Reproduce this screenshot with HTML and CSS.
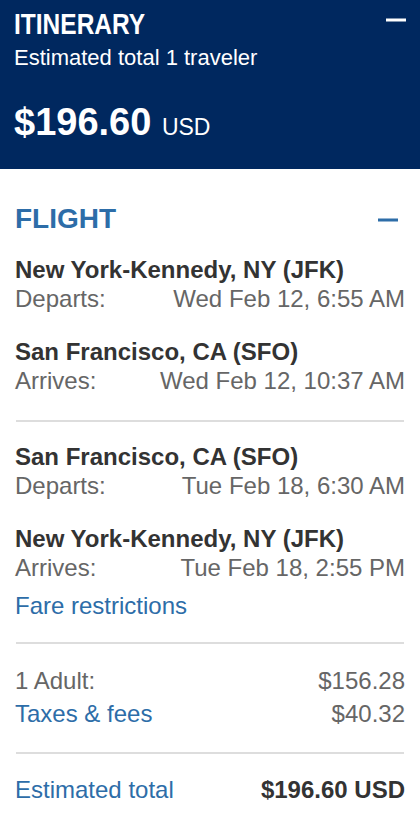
FILE: index.html
```html
<!DOCTYPE html>
<html lang="en">
<head>
<meta charset="utf-8">
<title>Itinerary</title>
<link rel="stylesheet" href="styles.css">
</head>
<body>
<div class="summary">
  <header class="header">
    <div class="title-row">
      <h1 class="title"><span class="title-text">ITINERARY</span></h1>
      <svg class="collapse" width="20" height="4" viewBox="0 0 20 4" aria-hidden="true"><rect x="0" y="0.5" width="20" height="3" fill="#ffffff"/></svg>
    </div>
    <div class="subtitle">Estimated total 1 traveler</div>
    <div class="price">$196.60 <span class="usd">USD</span></div>
  </header>

  <section class="content">
    <div class="flight-head">
      <h2 class="flight-title">FLIGHT</h2>
      <svg class="collapse-blue" width="20" height="4" viewBox="0 0 20 4" aria-hidden="true"><rect x="0" y="0.5" width="20" height="3" fill="#2d6da8"/></svg>
    </div>

    <div class="segment first">
      <div class="leg">
        <div class="city">New York-Kennedy, NY (JFK)</div>
        <div class="row"><span>Departs:</span><span>Wed Feb 12, 6:55 AM</span></div>
      </div>
      <div class="leg">
        <div class="city">San Francisco, CA (SFO)</div>
        <div class="row"><span>Arrives:</span><span>Wed Feb 12, 10:37 AM</span></div>
      </div>
    </div>

    <div class="divider div-a"></div>

    <div class="segment">
      <div class="leg">
        <div class="city">San Francisco, CA (SFO)</div>
        <div class="row"><span>Departs:</span><span>Tue Feb 18, 6:30 AM</span></div>
      </div>
      <div class="leg">
        <div class="city">New York-Kennedy, NY (JFK)</div>
        <div class="row"><span>Arrives:</span><span>Tue Feb 18, 2:55 PM</span></div>
      </div>
    </div>

    <a class="link fare" href="#">Fare restrictions</a>

    <div class="divider div-b"></div>

    <div class="row price-row first-price"><span>1 Adult:</span><span>$156.28</span></div>
    <div class="row price-row taxes"><a class="link" href="#">Taxes &amp; fees</a><span>$40.32</span></div>

    <div class="divider div-c"></div>

    <div class="row total"><a class="link" href="#">Estimated total</a><span class="total-value">$196.60 USD</span></div>
  </section>
</div>
</body>
</html>
```

FILE: styles.css
```css
* { box-sizing: border-box; }

html, body {
  margin: 0;
  padding: 0;
  background: #ffffff;
}

body {
  font-family: "Liberation Sans", Arial, Helvetica, sans-serif;
  color: #333333;
}

.header {
  background: #00285f;
  color: #ffffff;
  padding: 7px 14px 25px 14px;
}

.title-row {
  display: flex;
  justify-content: space-between;
  align-items: flex-start;
}

.title {
  margin: 0;
  font-family: "Liberation Sans", Arial, sans-serif;
  font-weight: bold;
  font-size: 29px;
  line-height: 34px;
}

.title-text {
  display: inline-block;
  transform: scaleX(0.845);
  transform-origin: 0 50%;
}

.collapse {
  display: block;
  margin-top: 11px;
}

.subtitle {
  margin-top: 4px;
  font-size: 22px;
  line-height: 26px;
}

.price {
  margin-top: 29px;
  font-size: 38px;
  font-weight: bold;
  line-height: 44px;
}

.usd {
  font-size: 23px;
  font-weight: normal;
  line-height: 1;
}

.content {
  padding: 34px 15px 0 15px;
}

.flight-head {
  display: flex;
  justify-content: space-between;
  align-items: flex-start;
}

.flight-title {
  margin: 0;
  font-size: 28px;
  font-weight: bold;
  line-height: 32px;
  color: #2d6da8;
}

.collapse-blue {
  display: block;
  margin-top: 15px;
  margin-right: 7px;
}

.segment.first {
  margin-top: 20px;
}

.leg + .leg {
  margin-top: 24px;
}

.city {
  font-size: 24px;
  font-weight: bold;
  line-height: 29px;
  color: #333333;
}

.row {
  display: flex;
  justify-content: space-between;
  font-size: 24px;
  line-height: 29px;
  color: #666666;
}

.divider {
  height: 2px;
  background: #dddddd;
  margin-left: 1px;
  margin-right: 1px;
}

.div-a { margin-top: 25px; margin-bottom: 20px; }
.div-b { margin-top: 22px; }
.div-c { margin-top: 24px; }

.link {
  color: #2d6da8;
  text-decoration: none;
}

.fare {
  display: block;
  margin-top: 9px;
  font-size: 24px;
  line-height: 29px;
}

.first-price { margin-top: 22px; }
.taxes { margin-top: 4px; }

.total { margin-top: 21px; }

.total-value {
  font-weight: bold;
  color: #333333;
}
```
